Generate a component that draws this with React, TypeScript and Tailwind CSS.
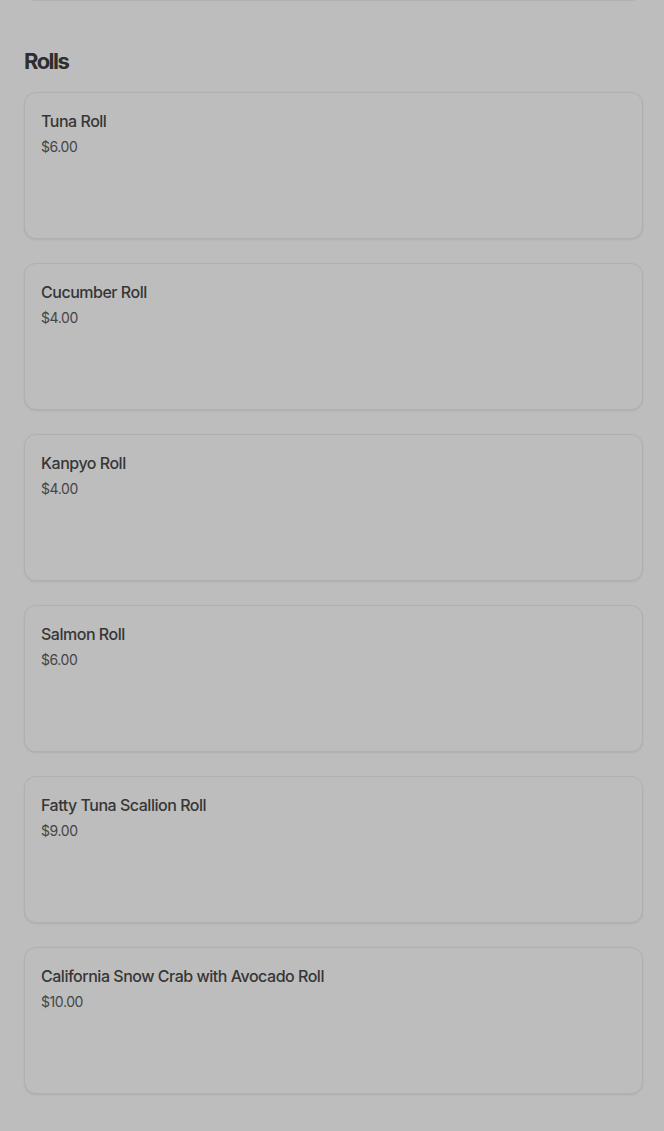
const rolls = [
  { name: "Tuna Roll", price: "$6.00" },
  { name: "Cucumber Roll", price: "$4.00" },
  { name: "Kanpyo Roll", price: "$4.00" },
  { name: "Salmon Roll", price: "$6.00" },
  { name: "Fatty Tuna Scallion Roll", price: "$9.00" },
  { name: "California Snow Crab with Avocado Roll", price: "$10.00" },
];

function ItemCard({ name, price }: { name: string; price: string }) {
  return (
    <div className="h-[147px] rounded-xl border border-[#b0b0b0] bg-[#bdbdbd] p-4 shadow-[0_1px_2px_rgba(0,0,0,0.08)]">
      <div className="text-[16px] leading-6 font-medium tracking-[-0.03em] text-[#363636]">{name}</div>
      <div className="mt-[4px] text-[14px] leading-5 tracking-[-0.03em] text-[#454545]">{price}</div>
    </div>
  );
}

export default function App() {
  return (
    <div
      className="min-h-[1131px] overflow-hidden bg-[#bdbdbd] pl-6 pr-[21px]"
      style={{ fontFamily: "Inter, 'Liberation Sans', sans-serif" }}
    >
      {/* tail of the previous section's last card */}
      <div className="-mt-[11px] h-3 rounded-b-xl border-x border-b border-[#b0b0b0]" />

      <h2 className="mt-[44px] mb-[15px] text-[22px] leading-8 font-bold tracking-[-0.07em] text-[#2e2e2e]">
        Rolls
      </h2>

      <div className="flex flex-col gap-6 pb-9">
        {rolls.map((r) => (
          <ItemCard key={r.name} name={r.name} price={r.price} />
        ))}
      </div>
    </div>
  );
}
